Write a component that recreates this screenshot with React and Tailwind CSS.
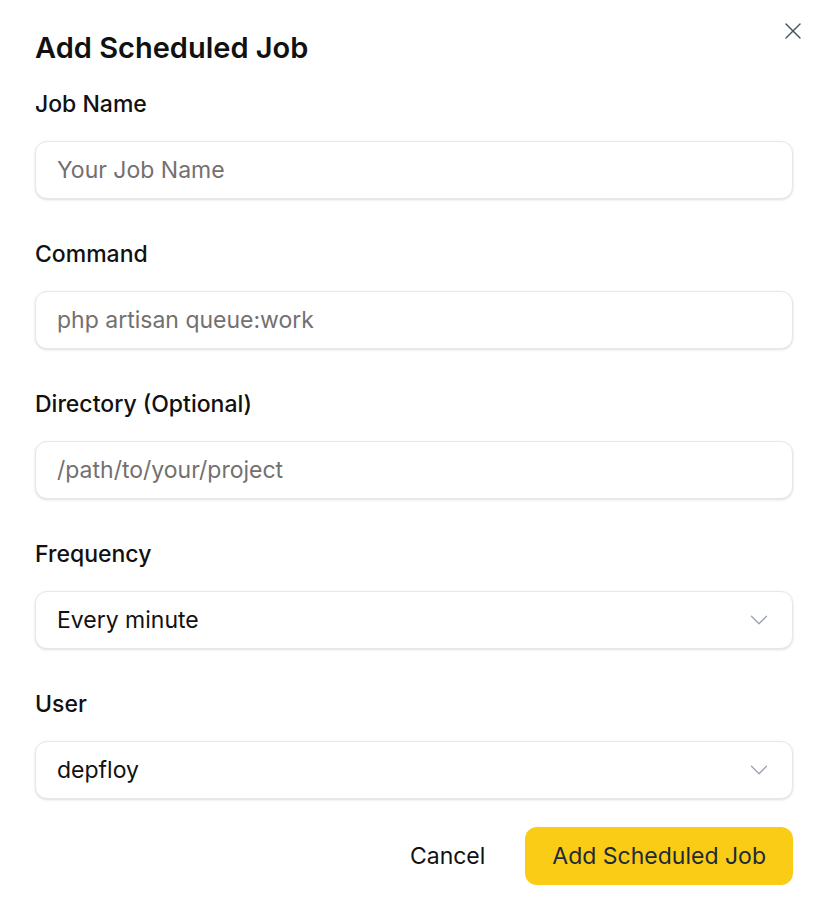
import { X, ChevronDown } from 'lucide-react';

const Field = ({ label, children }) => (
  <div className="flex flex-col">
    <label className="h-[30px] leading-[30px] text-[23px] font-medium text-[#111]">{label}</label>
    <div className="mt-[22px]">{children}</div>
  </div>
);

const TextInput = ({ placeholder }) => (
  <input
    placeholder={placeholder}
    className="w-full h-[58px] px-[21px] rounded-xl border border-gray-200 bg-white shadow-sm text-[23px] text-gray-900 placeholder:text-[#737070] outline-none"
  />
);

const SelectBox = ({ value }) => (
  <div className="w-full h-[58px] pl-[21px] pr-[18px] rounded-xl border border-gray-200 bg-white shadow-sm flex items-center justify-between">
    <span className="text-[23px] text-[#111]">{value}</span>
    <ChevronDown size={30} strokeWidth={1} className="text-gray-400" />
  </div>
);

export default function App() {
  return (
    <div className="bg-white min-h-screen w-[828px] relative" style={{ fontFamily: 'Inter, "Noto Sans", sans-serif' }}>
      <button className="absolute top-[17px] right-[21px] text-gray-600">
        <X size={28} strokeWidth={1.25} />
      </button>

      <div className="px-[35px] pt-[30px]">
        <h2 className="text-[29px] leading-[36px] font-semibold text-[#111]">Add Scheduled Job</h2>

        <div className="mt-[23px] flex flex-col gap-[40px]">
          <Field label="Job Name">
            <TextInput placeholder="Your Job Name" />
          </Field>
          <Field label="Command">
            <TextInput placeholder="php artisan queue:work" />
          </Field>
          <Field label="Directory (Optional)">
            <TextInput placeholder="/path/to/your/project" />
          </Field>
          <Field label="Frequency">
            <SelectBox value="Every minute" />
          </Field>
          <Field label="User">
            <SelectBox value="depfloy" />
          </Field>
        </div>

        <div className="mt-[28px] flex items-center justify-end gap-[40px]">
          <button className="text-[23px] text-[#111]">Cancel</button>
          <button className="h-[58px] px-[27px] rounded-xl bg-[#facc15] text-[23px] text-gray-800">
            Add Scheduled Job
          </button>
        </div>
      </div>
    </div>
  );
}
